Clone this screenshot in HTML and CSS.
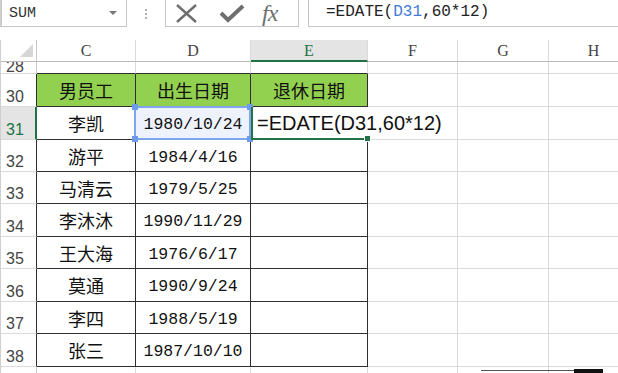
FILE: index.html
```html
<!DOCTYPE html>
<html>

<head>
	<meta charset='utf-8'>
	<title>EDATE</title>
	<link rel="stylesheet" href="styles.css">
</head>

<body>
	<div class="fbar">
		<div class="namebox"><span>SUM</span><i class="drop"></i></div>
		<div class="grip"><i></i><i></i><i></i></div>
		<div class="fbtns">
			<svg class="ico" width="24" height="20" viewBox="0 0 24 20"><path d="M2 2 L21 19 M21 2 L2 19" stroke="#6e6e6e" stroke-width="2.4" fill="none"/></svg>
			<svg class="ico" width="26" height="20" viewBox="0 0 26 20"><path d="M2 10 L9 17 L24 3" stroke="#6e6e6e" stroke-width="4" fill="none"/></svg>
			<span class="fx">fx</span>
		</div>
		<div class="finput">=EDATE(<span class="ref">D31</span>,60*12)</div>
	</div>

	<div class="sheet">
		<!-- column headers -->
		<div class="corner"><i></i></div>
		<div class="ch">C</div>
		<div class="ch">D</div>
		<div class="ch ch_sel">E</div>
		<div class="ch">F</div>
		<div class="ch">G</div>
		<div class="ch">H</div>

		<!-- row 28 (row 29 hidden) -->
		<div class="rh rh_cut">28</div>
		<div class="c top"></div><div class="c top"></div><div class="c top"></div><div class="c"></div><div class="c"></div><div class="c"></div>

		<div class="rh rh_t">30</div>
		<div class="c t th">男员工</div><div class="c t th">出生日期</div><div class="c t th">退休日期</div><div class="c"></div><div class="c"></div><div class="c"></div>

		<div class="rh rh_t rh_sel">31</div>
		<div class="c t">李凯</div>
		<div class="c t d refcell">1980/10/24<span class="refbox"><i class="k k1"></i><i class="k k2"></i><i class="k k3"></i><i class="k k4"></i></span></div>
		<div class="c t edit">=EDATE(D31,60*12)<span class="activebox"></span><span class="fill"></span></div>
		<div class="c"></div><div class="c"></div><div class="c"></div>

		<div class="rh rh_t">32</div>
		<div class="c t">游平</div><div class="c t d">1984/4/16</div><div class="c t"></div><div class="c"></div><div class="c"></div><div class="c"></div>

		<div class="rh rh_t">33</div>
		<div class="c t">马清云</div><div class="c t d">1979/5/25</div><div class="c t"></div><div class="c"></div><div class="c"></div><div class="c"></div>

		<div class="rh rh_t">34</div>
		<div class="c t">李沐沐</div><div class="c t d">1990/11/29</div><div class="c t"></div><div class="c"></div><div class="c"></div><div class="c"></div>

		<div class="rh rh_t">35</div>
		<div class="c t">王大海</div><div class="c t d">1976/6/17</div><div class="c t"></div><div class="c"></div><div class="c"></div><div class="c"></div>

		<div class="rh rh_t">36</div>
		<div class="c t">莫通</div><div class="c t d">1990/9/24</div><div class="c t"></div><div class="c"></div><div class="c"></div><div class="c"></div>

		<div class="rh rh_t">37</div>
		<div class="c t">李四</div><div class="c t d">1988/5/19</div><div class="c t"></div><div class="c"></div><div class="c"></div><div class="c"></div>

		<div class="rh rh_t">38</div>
		<div class="c t">张三</div><div class="c t d">1987/10/10</div><div class="c t"></div><div class="c"></div><div class="c"></div><div class="c"></div>

		<div class="rh"></div>
		<div class="c"></div><div class="c"></div><div class="c"></div><div class="c"></div><div class="c"></div><div class="c"></div>

		<span class="mark"></span>
	</div>
</body>

</html>
```

FILE: styles.css
```css
body {
	margin: 0;
	background: white;
	width: 618px;
	height: 373px;
	overflow: hidden;
	font-family: "Liberation Sans", sans-serif;
}

/* formula bar */
.fbar {
	display: flex;
	height: 27px;
	border-left: 1px solid #cfcfcf;
}
.namebox {
	width: 126px;
	margin-top: -1px;
	border: 1px solid #c6c6c6;
	display: flex;
	align-items: center;
	justify-content: space-between;
	padding: 0 9px 0 7px;
	box-sizing: border-box;
	font: 15px "Liberation Mono", monospace;
	color: #333;
}
.drop {
	border-left: 4px solid transparent;
	border-right: 4px solid transparent;
	border-top: 4px solid #777;
}
.grip {
	width: 38px;
	display: flex;
	flex-direction: column;
	align-items: center;
	justify-content: center;
	gap: 2px;
}
.grip i {
	width: 2px;
	height: 2px;
	background: #b0b0b0;
}
.fbtns {
	width: 134px;
	margin-top: -1px;
	border: 1px solid #c6c6c6;
	box-sizing: border-box;
	display: flex;
	align-items: center;
	padding-left: 9px;
	gap: 20px;
}
.ico {
	display: block;
}
.fx {
	font: italic 24px "Liberation Serif", serif;
	color: #6e6e6e;
	margin-left: -3px;
	letter-spacing: -1px;
}
.finput {
	flex: 1;
	margin: -1px 0 0 9px;
	border: 1px solid #c6c6c6;
	border-right: none;
	padding-left: 17px;
	font: 16px "Liberation Mono", monospace;
	color: #222;
	line-height: 25px;
	white-space: nowrap;
}
.ref {
	color: #3f7ad8;
}

/* sheet grid */
.sheet {
	position: relative;
	margin-top: 13px;
	display: grid;
	grid-template-columns: 36px 99px 115px 117px 90px 91px 90px;
	grid-template-rows: 22px 12px 33px 33px 32px 32px 33px 32px 33px 32px 33px 12px;
	border-left: 1px solid #cfcfcf;
	width: 638px;
}
.sheet > div {
	box-sizing: border-box;
	border-right: 1px solid #dadada;
	border-bottom: 1px solid #dadada;
}
.corner {
	display: flex;
	justify-content: flex-end;
	align-items: flex-end;
	padding: 0 3px 4px 0;
	border-right-color: #c8c8c8 !important;
	border-bottom-color: #b8b8b8 !important;
}
.corner i {
	border-left: 13px solid transparent;
	border-bottom: 13px solid #d6d6d6;
}
.ch {
	font: 16px "Liberation Serif", serif;
	color: #444;
	text-align: center;
	line-height: 22px;
	border-bottom-color: #b8b8b8 !important;
}
.ch_sel {
	background: #e4e4e4;
	color: #217346;
	border-bottom: 2px solid #217346 !important;
}
.rh {
	font-size: 16px;
	color: #444;
	padding-left: 5px;
	display: flex;
	align-items: flex-end;
	padding-bottom: 1px;
	overflow: hidden;
	line-height: 16px;
	border-right-color: #c8c8c8 !important;
}
.rh_cut {
	line-height: 12px;
	padding-bottom: 0;
}
.rh_t {
	border-right-color: #2e2e2e !important;
}
.rh_sel {
	background: #e4e4e4;
	color: #217346;
	border-right: 2px solid #217346 !important;
}
.c {
	font: 18px "Noto Sans CJK SC", sans-serif;
	color: #111;
	display: flex;
	align-items: center;
	justify-content: center;
	white-space: nowrap;
}
.top {
	border-bottom-color: #2e2e2e !important;
}
.t {
	border-color: #2e2e2e !important;
}
.th {
	background: #92d050;
}
.d {
	font: 16.5px "Liberation Mono", monospace;
	padding-top: 3px;
}

/* referenced cell D31 */
.refcell {
	position: relative;
	background: #eef2fc;
}
.refbox {
	position: absolute;
	left: -2px;
	top: -1px;
	right: -1px;
	bottom: -1px;
	border: 2px solid #7ea6ea;
}
.k {
	position: absolute;
	width: 6px;
	height: 6px;
	background: #6d9be8;
}
.k1 { left: -4px; top: -4px; }
.k2 { right: -4px; top: -4px; }
.k3 { left: -4px; bottom: -4px; }
.k4 { right: -4px; bottom: -4px; }

/* active cell E31 being edited */
.edit {
	position: relative;
	z-index: 2;
	justify-content: flex-start;
	padding-left: 6px;
	font: 20px "Liberation Sans", sans-serif;
	overflow: visible;
	border-right-color: transparent !important;
}
.activebox {
	position: absolute;
	left: 0;
	top: 0;
	width: 116px;
	bottom: -1px;
	border-left: 2px solid #217346;
	border-bottom: 2px solid #217346;
}
.fill {
	position: absolute;
	left: 113px;
	bottom: -3px;
	width: 5px;
	height: 5px;
	background: #217346;
	border: 1px solid white;
}
.mark {
	position: absolute;
	left: 480px;
	top: 330px;
	width: 122px;
	height: 4px;
	border-top: 1px solid #555;
	box-sizing: border-box;
}
.mark::after {
	content: "";
	position: absolute;
	right: 0;
	top: -2px;
	width: 29px;
	height: 4px;
	background: #111;
}
```
